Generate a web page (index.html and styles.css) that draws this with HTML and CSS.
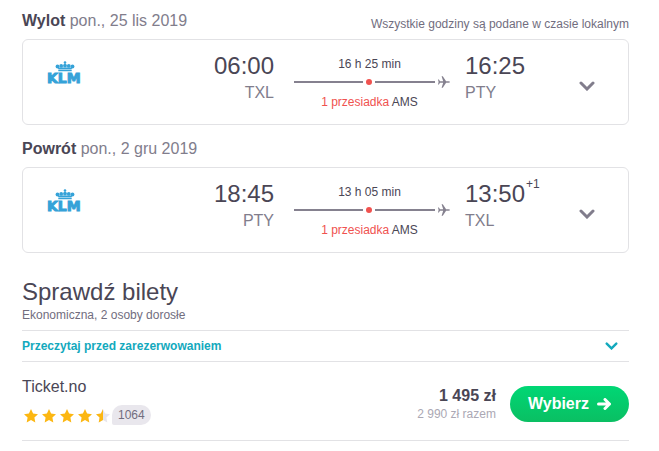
FILE: index.html
```
<!DOCTYPE html>
<html lang="pl">
<head>
  <meta charset="UTF-8" />
  <meta name="viewport" content="width=device-width, initial-scale=1" />
  <title>Sprawdź bilety</title>
  <link rel="stylesheet" href="styles.css">
</head>
<body>

  <!-- Shared icons -->
  <svg class="sprite" aria-hidden="true">
    <symbol id="klm" viewBox="0 0 38 24">
      <circle cx="19" cy="1.500" r="1.300" />
      <path d="M18.500 2.500h1v3h-1z" />
      <circle cx="11.500" cy="5.500" r="1.900" />
      <circle cx="15.200" cy="4.900" r="1.900" />
      <circle cx="19" cy="4.700" r="1.900" />
      <circle cx="22.800" cy="4.900" r="1.900" />
      <circle cx="26.500" cy="5.500" r="1.900" />
      <path d="M11.500 6.500h15l-1 1.700h-13zM12.300 8.700h13.400v1.600H12.300z" />
      <text x="1" y="22">KLM</text>
    </symbol>
    <symbol id="plane" viewBox="0 0 12 12">
      <path d="M2 5.300H5.200L3.600.3h1.200l3.300 5H10.500Q12 5.500 12 6T10.500 6.700H8.100l-3.300 5H3.600l1.600-5H2L.9 8.500H0L.6 6 0 3.500h.9z" />
    </symbol>
    <symbol id="chevron" viewBox="0 0 16 10">
      <path d="M2 2l6 6 6-6" fill="none" stroke="currentColor" stroke-width="3" stroke-linecap="round" />
    </symbol>
    <symbol id="star" viewBox="0 0 14 14">
      <path d="M7 0l2.100 4.600 4.900.6-3.600 3.400.9 4.900L7 11.100l-4.300 2.400.9-4.900L0 5.200l4.900-.6z" />
    </symbol>
  </svg>

  <main>
    <!-- Outbound -->
    <section class="leg">
      <header>
        <h2>Wylot <span>pon., 25 lis 2019</span></h2>
        <p class="note">Wszystkie godziny są podane w czasie lokalnym</p>
      </header>
      <div class="card">
        <svg class="logo" role="img" aria-label="KLM"><use href="#klm" /></svg>
        <div class="stop from">
          <div class="time">06:00</div>
          <div class="code">TXL</div>
        </div>
        <div class="route">
          <div>16 h 25 min</div>
          <div class="track"><i></i><b></b><i></i><svg><use href="#plane" /></svg></div>
          <div><span class="change">1 przesiadka</span> AMS</div>
        </div>
        <div class="stop to">
          <div class="time">16:25</div>
          <div class="code">PTY</div>
        </div>
        <button class="toggle" aria-label="Szczegóły lotu"><svg><use href="#chevron" /></svg></button>
      </div>
    </section>

    <!-- Return -->
    <section class="leg">
      <header>
        <h2>Powrót <span>pon., 2 gru 2019</span></h2>
      </header>
      <div class="card">
        <svg class="logo" role="img" aria-label="KLM"><use href="#klm" /></svg>
        <div class="stop from">
          <div class="time">18:45</div>
          <div class="code">PTY</div>
        </div>
        <div class="route">
          <div>13 h 05 min</div>
          <div class="track"><i></i><b></b><i></i><svg><use href="#plane" /></svg></div>
          <div><span class="change">1 przesiadka</span> AMS</div>
        </div>
        <div class="stop to">
          <div class="time">13:50<sup>+1</sup></div>
          <div class="code">TXL</div>
        </div>
        <button class="toggle" aria-label="Szczegóły lotu"><svg><use href="#chevron" /></svg></button>
      </div>
    </section>

    <!-- Tickets -->
    <section class="tickets">
      <h1>Sprawdź bilety</h1>
      <p class="cabin">Ekonomiczna, 2 osoby dorosłe</p>
      <button class="read-first">Przeczytaj przed zarezerwowaniem <svg><use href="#chevron" /></svg></button>

      <div class="offer">
        <div class="seller">
          <div class="name">Ticket.no</div>
          <div class="rating">
            <svg><use href="#star" /></svg>
            <svg><use href="#star" /></svg>
            <svg><use href="#star" /></svg>
            <svg><use href="#star" /></svg>
            <svg viewBox="0 0 14 14">
              <use class="empty" href="#star" width="14" height="14" />
              <path d="M7 0v11.100l-4.300 2.400.9-4.900L0 5.200l4.900-.6z" />
            </svg>
            <span class="count">1064</span>
          </div>
        </div>
        <div class="price">
          <strong>1 495 zł</strong>
          <span>2 990 zł razem</span>
        </div>
        <button class="choose">Wybierz
          <svg viewBox="0 0 14 12"><path d="M1.500 6h11M8 1.500L12.500 6 8 10.500" /></svg>
        </button>
      </div>
    </section>
  </main>

</body>
</html>
```
FILE: styles.css
```
body {
  font-family: "Liberation Sans", Arial, sans-serif;
  font-size: 12px;
  line-height: 16px;
  margin: 0;
  background: #fff;
  color: #4a4655;
}

main {
  padding: 9px 30px 10px 22px;
}

h1, h2, p {
  margin: 0;
}

button {
  font: inherit;
  border: none;
  background: none;
  padding: 0;
  cursor: pointer;
}

svg {
  display: block;
  fill: currentColor;
  flex: none;
}

.sprite {
  display: none;
}

/* Flight legs */
.leg {
  margin-bottom: 12px;
}

.leg header {
  display: flex;
  justify-content: space-between;
  align-items: flex-end;
  margin-bottom: 6px;
}

.leg h2 {
  font-size: 16px;
  line-height: 24px;
}

.leg h2 span {
  font-weight: normal;
  color: #817d8c;
}

.note {
  padding-bottom: 1px;
  color: #716d7e;
}

.card {
  display: flex;
  align-items: flex-start;
  padding: 12px 33px 14px 23px;
  border: 1px solid #e2e2e5;
  border-radius: 6px;
}

.logo {
  width: 38px;
  height: 24px;
  margin-top: 9px;
  color: #35a2d8;
}

#klm text {
  font: bold 14px "DejaVu Sans", sans-serif;
  stroke: currentColor;
  stroke-width: 1;
}

.time {
  font-size: 24px;
  line-height: 28px;
}

.time sup {
  font-size: 12px;
  line-height: 0;
  vertical-align: 14px;
  margin-left: 1px;
}

.code {
  margin-top: 1px;
  font-size: 16px;
  line-height: 24px;
  color: #817d8c;
}

.from {
  flex: 1;
  text-align: right;
}

.to {
  width: 114px;
}

.route {
  width: 156px;
  margin: 4px 15px 0 20px;
  text-align: center;
}

.route > div {
  padding-right: 5px;
}

.route > .track {
  display: flex;
  align-items: center;
  gap: 3px;
  height: 14px;
  margin: 3px 0 5px;
  padding: 0;
  color: #85818f;
}

.track i {
  flex: 6;
  height: 2px;
  background: currentColor;
}

.track i:first-child {
  flex: 7;
}

.track b {
  width: 6px;
  height: 6px;
  border-radius: 50%;
  background: #f0524f;
}

.track svg {
  width: 12px;
  height: 12px;
}

.change {
  color: #f0524f;
}

.toggle {
  margin-top: 29px;
  color: #817d8c;
}

.toggle svg {
  width: 16px;
  height: 10px;
}

/* Tickets */
.tickets {
  padding-top: 12px;
}

h1 {
  font-size: 24px;
  font-weight: normal;
  line-height: 30px;
}

.cabin {
  padding-bottom: 7px;
  color: #716d7e;
}

.read-first {
  display: flex;
  justify-content: space-between;
  align-items: center;
  width: 100%;
  height: 32px;
  padding-right: 11px;
  border: solid #e2e2e5;
  border-width: 1px 0;
  font-weight: bold;
  color: #13a9bd;
}

.read-first svg {
  width: 13px;
  height: 8px;
}

.offer {
  display: flex;
  align-items: center;
  padding: 13px 0 8px;
  border-bottom: 1px solid #e2e2e5;
}

.seller {
  flex: 1;
  padding-bottom: 5px;
}

.name {
  font-size: 16px;
  line-height: 24px;
}

.rating {
  display: flex;
  align-items: center;
  gap: 4px;
  margin-top: 6px;
  padding-left: 2px;
  color: #fcb712;
}

.rating svg {
  width: 14px;
  height: 14px;
}

.rating .empty {
  color: #e7e5eb;
}

.count {
  height: 20px;
  margin: 0 0 2px -2px;
  padding: 0 6px;
  border-radius: 10px 10px 10px 2px;
  background: #e9e7ed;
  color: #716d7e;
  line-height: 20px;
}

.price {
  margin-right: 14px;
  text-align: right;
}

.price strong {
  display: block;
  font-size: 16px;
  line-height: 20px;
}

.price span {
  color: #aba8b4;
}

.choose {
  display: flex;
  align-items: center;
  gap: 8px;
  height: 36px;
  padding: 0 18px;
  border-radius: 18px;
  background: linear-gradient(#00d775, #0abf63);
  color: #fff;
  font-size: 16px;
  font-weight: bold;
}

.choose svg {
  width: 14px;
  height: 12px;
  fill: none;
  stroke: currentColor;
  stroke-width: 3;
  stroke-linecap: round;
  stroke-linejoin: round;
}
```
